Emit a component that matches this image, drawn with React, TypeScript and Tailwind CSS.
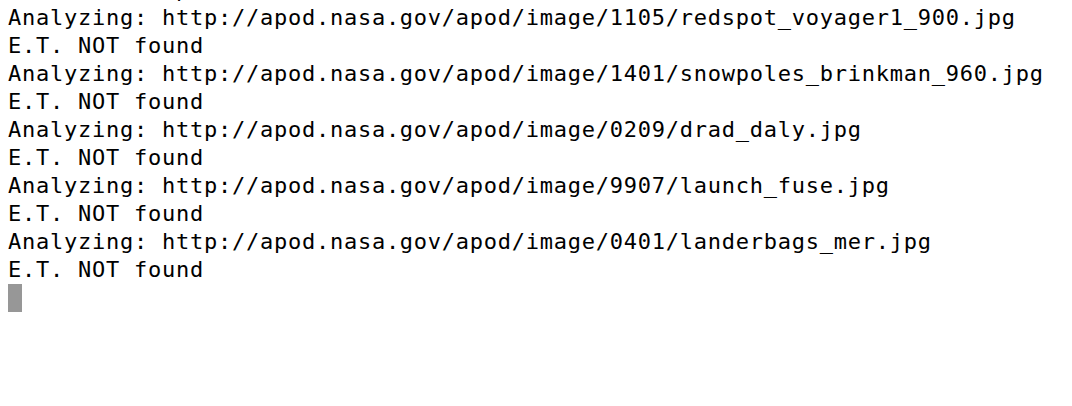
import React from "react";

const urls = [
  "http://apod.nasa.gov/apod/image/1105/redspot_voyager1_900.jpg",
  "http://apod.nasa.gov/apod/image/1401/snowpoles_brinkman_960.jpg",
  "http://apod.nasa.gov/apod/image/0209/drad_daly.jpg",
  "http://apod.nasa.gov/apod/image/9907/launch_fuse.jpg",
  "http://apod.nasa.gov/apod/image/0401/landerbags_mer.jpg",
];

const App = () => {
  return (
    <div className="w-[1072px] h-[406px] overflow-hidden bg-white text-black">
      <div
        className="-mt-[24px] pl-[8px] text-[22px] leading-[28px] tracking-[0.75px] whitespace-pre"
        style={{ fontFamily: '"DejaVu Sans Mono", "Liberation Mono", monospace' }}
      >
        <div>Scanned 812 photos; 0 matches.</div>
        {urls.map((u) => (
          <React.Fragment key={u}>
            <div>Analyzing: {u}</div>
            <div>E.T. NOT found</div>
          </React.Fragment>
        ))}
        <div className="h-[28px] flex items-center">
          <span className="block w-[14px] h-[28px] bg-[#979797]" />
        </div>
      </div>
    </div>
  );
};

export default App;
